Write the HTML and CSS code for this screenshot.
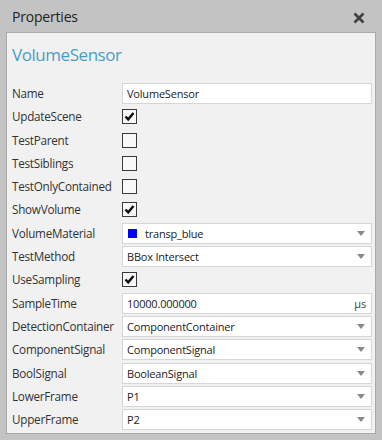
FILE: index.html
```html
<!DOCTYPE html>
<html>
<head>
<meta charset="utf-8">
<link rel="stylesheet" href="styles.css">
</head>
<body>
<div class="header">
  <span class="title">Properties</span>
  <svg class="close" width="12" height="12" viewBox="0 0 12 12"><path d="M1.5 1.5 L10.5 10.5 M10.5 1.5 L1.5 10.5" stroke="#404040" stroke-width="2.6" stroke-linecap="butt"/></svg>
</div>
<div class="panel">
  <div class="heading">VolumeSensor</div>
  <div class="grid">
    <div class="label">Name</div>
    <div class="field text">VolumeSensor</div>

    <div class="label">UpdateScene</div>
    <div class="cbcell"><span class="cb checked"><svg viewBox="0 0 13 13" width="13" height="13"><path d="M2.5 6.5 L5.2 9.3 L10.5 3" fill="none" stroke="#111" stroke-width="2.5"/></svg></span></div>

    <div class="label">TestParent</div>
    <div class="cbcell"><span class="cb"></span></div>

    <div class="label">TestSiblings</div>
    <div class="cbcell"><span class="cb"></span></div>

    <div class="label">TestOnlyContained</div>
    <div class="cbcell"><span class="cb"></span></div>

    <div class="label">ShowVolume</div>
    <div class="cbcell"><span class="cb checked"><svg viewBox="0 0 13 13" width="13" height="13"><path d="M2.5 6.5 L5.2 9.3 L10.5 3" fill="none" stroke="#111" stroke-width="2.5"/></svg></span></div>

    <div class="label">VolumeMaterial</div>
    <div class="field combo"><span class="swatch"></span><span class="val">transp_blue</span><span class="arrow"></span></div>

    <div class="label">TestMethod</div>
    <div class="field combo"><span class="val">BBox Intersect</span><span class="arrow"></span></div>

    <div class="label">UseSampling</div>
    <div class="cbcell"><span class="cb checked"><svg viewBox="0 0 13 13" width="13" height="13"><path d="M2.5 6.5 L5.2 9.3 L10.5 3" fill="none" stroke="#111" stroke-width="2.5"/></svg></span></div>

    <div class="label">SampleTime</div>
    <div class="field combo"><span class="val">10000.000000</span><span class="unit">µs</span></div>

    <div class="label">DetectionContainer</div>
    <div class="field combo"><span class="val">ComponentContainer</span><span class="arrow"></span></div>

    <div class="label">ComponentSignal</div>
    <div class="field combo"><span class="val">ComponentSignal</span><span class="arrow"></span></div>

    <div class="label">BoolSignal</div>
    <div class="field combo"><span class="val">BooleanSignal</span><span class="arrow"></span></div>

    <div class="label">LowerFrame</div>
    <div class="field combo"><span class="val">P1</span><span class="arrow"></span></div>

    <div class="label">UpperFrame</div>
    <div class="field combo"><span class="val">P2</span><span class="arrow"></span></div>
  </div>
</div>
</body>
</html>
```
FILE: styles.css
```css
html, body {
  margin: 0;
  padding: 0;
}
body {
  background: #c3c3c3;
  font-family: "Open Sans", "Noto Sans", sans-serif;
  color: #2b2b2b;
  width: 382px;
  height: 440px;
  overflow: hidden;
}
.header {
  height: 32px;
  display: flex;
  align-items: center;
  justify-content: space-between;
  padding: 0 17px 0 12px;
  box-sizing: border-box;
}
.title {
  font-size: 14px;
  color: #222;
  letter-spacing: -0.2px;
}
.close {
  display: block;
  margin-top: 4px;
}
.panel {
  margin: 0 6px;
  border: 1px solid #a9a9a9;
  background: #f1f1f1;
  height: 402px;
  box-sizing: border-box;
  padding: 10px 3px 0 5px;
}
.heading {
  font-size: 17px;
  color: #4a9ec5;
  line-height: 24px;
  letter-spacing: -0.45px;
  margin-bottom: 16px;
}
.grid {
  display: grid;
  grid-template-columns: 110px 1fr;
  grid-auto-rows: 21px;
  row-gap: 2.3px;
}
.label {
  font-size: 11.7px;
  line-height: 21px;
  color: #333;
  letter-spacing: -0.25px;
  white-space: nowrap;
}
.field {
  background: #fff;
  border: 1px solid #d6d6d6;
  box-sizing: border-box;
  font-size: 11px;
  color: #222;
  display: flex;
  align-items: center;
  padding: 0 5px 0 4px;
  letter-spacing: -0.2px;
  white-space: nowrap;
}
.combo .val {
  flex: 1;
}
.swatch {
  width: 9px;
  height: 9px;
  background: #0000ff;
  margin: 0 8px 0 1px;
}
.arrow {
  width: 0;
  height: 0;
  border-left: 4px solid transparent;
  border-right: 4px solid transparent;
  border-top: 5px solid #8a8a8a;
  margin-right: 1px;
}
.unit {
  color: #444;
  margin-right: 0;
}
.cbcell {
  display: flex;
  align-items: center;
}
.cb {
  width: 15px;
  height: 15px;
  border: 1px solid #3a3a3a;
  box-sizing: border-box;
  background: #f8f8f8;
  display: flex;
  align-items: center;
  justify-content: center;
}
.cb svg {
  display: block;
  flex: none;
}
```
